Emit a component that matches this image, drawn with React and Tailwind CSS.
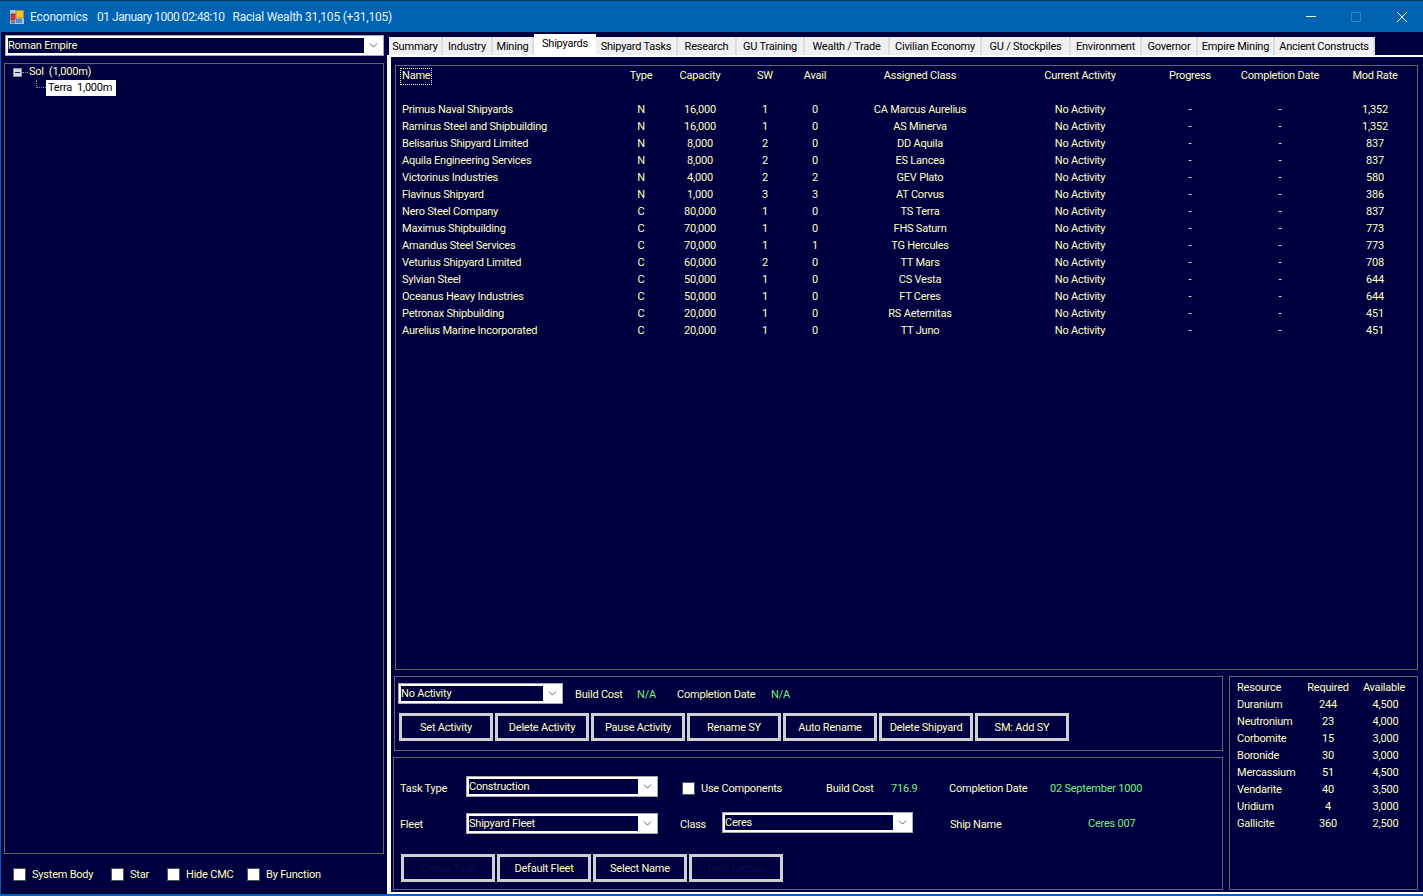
import React from 'react';
import { ChevronDown } from 'lucide-react';

const YELLOW = 'text-[#ffffc0]';
const GREEN = 'text-[#70f07c]';

const columns = [
  'w-[221px] text-left pl-[6px]',
  'w-[48px] text-center',
  'w-[70px] text-center',
  'w-[60px] text-center',
  'w-[40px] text-center',
  'w-[170px] text-center',
  'w-[150px] text-center',
  'w-[70px] text-center',
  'w-[110px] text-center',
  'w-[80px] text-center',
];

const shipyards = [
  ['Primus Naval Shipyards', 'N', '16,000', '1', '0', 'CA Marcus Aurelius', '1,352'],
  ['Ramirus Steel and Shipbuilding', 'N', '16,000', '1', '0', 'AS Minerva', '1,352'],
  ['Belisarius Shipyard Limited', 'N', '8,000', '2', '0', 'DD Aquila', '837'],
  ['Aquila Engineering Services', 'N', '8,000', '2', '0', 'ES Lancea', '837'],
  ['Victorinus Industries', 'N', '4,000', '2', '2', 'GEV Plato', '580'],
  ['Flavinus Shipyard', 'N', '1,000', '3', '3', 'AT Corvus', '386'],
  ['Nero Steel Company', 'C', '80,000', '1', '0', 'TS Terra', '837'],
  ['Maximus Shipbuilding', 'C', '70,000', '1', '0', 'FHS Saturn', '773'],
  ['Amandus Steel Services', 'C', '70,000', '1', '1', 'TG Hercules', '773'],
  ['Veturius Shipyard Limited', 'C', '60,000', '2', '0', 'TT Mars', '708'],
  ['Sylvian Steel', 'C', '50,000', '1', '0', 'CS Vesta', '644'],
  ['Oceanus Heavy Industries', 'C', '50,000', '1', '0', 'FT Ceres', '644'],
  ['Petronax Shipbuilding', 'C', '20,000', '1', '0', 'RS Aeternitas', '451'],
  ['Aurelius Marine Incorporated', 'C', '20,000', '1', '0', 'TT Juno', '451'],
];

const tabs = [
  ['Summary', 'w-[54px]'],
  ['Industry', 'w-[50px]'],
  ['Mining', 'w-[41px]'],
  ['Shipyards', 'w-[62px]'],
  ['Shipyard Tasks', 'w-[82px]'],
  ['Research', 'w-[59px]'],
  ['GU Training', 'w-[68px]'],
  ['Wealth / Trade', 'w-[85px]'],
  ['Civilian Economy', 'w-[92px]'],
  ['GU / Stockpiles', 'w-[89px]'],
  ['Environment', 'w-[71px]'],
  ['Governor', 'w-[56px]'],
  ['Empire Mining', 'w-[77px]'],
  ['Ancient Constructs', 'w-[100px]'],
];

const resources = [
  ['Duranium', '244', '4,500'],
  ['Neutronium', '23', '4,000'],
  ['Corbomite', '15', '3,000'],
  ['Boronide', '30', '3,000'],
  ['Mercassium', '51', '4,500'],
  ['Vendarite', '40', '3,500'],
  ['Uridium', '4', '3,000'],
  ['Gallicite', '360', '2,500'],
];

const Combo = ({ text, className }) => (
  <div className={`flex h-[21px] border border-[#a8a8a8] bg-white ${className}`}>
    <div className="flex-1 my-[2px] ml-[2px] bg-[#000040] leading-[16px] text-[#ffffc0]">{text}</div>
    <div className="w-[19px] flex items-center justify-center">
      <ChevronDown size={13} strokeWidth={1.5} className="text-[#404040]" />
    </div>
  </div>
);

const Button = ({ children, disabled }) => (
  <button className={`w-[94px] h-[28px] border-[3px] border-[#d0d0d0] bg-[#000040] text-center pt-[2px] ${disabled ? 'text-[#0c0c48]' : YELLOW}`}>
    {children}
  </button>
);

const Check = ({ label, className }) => (
  <div className={`flex items-center ${className}`}>
    <div className="w-[13px] h-[13px] bg-white border border-[#555]" />
    <span className={`ml-[6px] pt-[2px] ${YELLOW}`}>{label}</span>
  </div>
);

const TitleBar = () => (
  <div className="h-8 shrink-0 bg-[#0063b1] border-t border-[#0a3560] flex items-center text-[12px] tracking-[-0.15px] text-[#e4f2ff] pl-[10px]">
    <svg width="14" height="14" viewBox="0 0 14 14" className="shrink-0">
      <rect x="0" y="0" width="14" height="14" fill="#b9c4d2" />
      <rect x="6" y="0.5" width="7.5" height="7.5" fill="#f4c430" stroke="#8a6a10" strokeWidth="0.6" />
      <rect x="1" y="4" width="4" height="6" fill="#d8372a" stroke="#7a1a12" strokeWidth="0.6" />
      <rect x="6" y="9" width="6" height="4" fill="#4a8fdc" />
      <rect x="1" y="11" width="4" height="2.5" fill="#6a7a90" />
    </svg>
    <span className="ml-[6px] whitespace-pre">Economics</span>
    <span className="ml-[9px] whitespace-pre tracking-[-0.45px]">01 January 1000 02:48:10</span>
    <span className="ml-[8px] whitespace-pre tracking-[-0.2px]">Racial Wealth 31,105 (+31,105)</span>
    <div className="ml-auto flex items-center pr-[16px]">
      <div className="w-[10px] h-px bg-white" />
      <div className="w-[10px] h-[10px] ml-[35px] border border-[#2f80c6]" />
      <svg width="10" height="10" viewBox="0 0 10 10" className="ml-[36px]">
        <path d="M0 0L10 10M10 0L0 10" stroke="white" strokeWidth="1" />
      </svg>
    </div>
  </div>
);

const LeftPanel = () => (
  <div className="w-[386px] shrink-0 flex flex-col pl-[3px] pr-[2px]">
    <Combo text="Roman Empire" className="mt-[3px] ml-[1px] w-[379px] h-[20px]" />
    <div className="mt-[7px] w-[380px] h-[791px] border border-[#666] pl-[8px]">
      <div className="flex items-center h-[16px]">
        <div className="w-[9px] h-[9px] bg-[#d8d8e0] border border-[#8c8c9c] flex items-center justify-center">
          <div className="w-[5px] h-px bg-[#202060]" />
        </div>
        <div className="w-[6px] border-t border-dotted border-[#8c8c9c] mr-[1px]" />
        <span className={`whitespace-pre ${YELLOW}`}>Sol  (1,000m)</span>
      </div>
      <div className="flex items-center h-[16px] ml-[23px]">
        <div className="w-[10px] h-[8px] -mt-[8px] border-l border-b border-dotted border-[#8c8c9c]" />
        <span className="bg-white text-black px-[2px] h-[16px] leading-[16px] whitespace-pre w-[70px]">Terra  1,000m</span>
      </div>
    </div>
    <div className="flex mt-[11px] ml-[9px]">
      <Check label="System Body" className="w-[98px]" />
      <Check label="Star" className="w-[56px]" />
      <Check label="Hide CMC" className="w-[80px]" />
      <Check label="By Function" />
    </div>
  </div>
);

const TabStrip = () => (
  <div className="h-[23px] shrink-0 flex items-end pl-[2px]">
    {tabs.map(([name, width]) => name === 'Shipyards' ? (
      <div key={name} className={`${width} h-[21px] bg-white text-black text-center leading-[20px] shrink-0`}>{name}</div>
    ) : (
      <div key={name} className={`${width} h-[18px] bg-[#f0f0f0] border-r-2 border-[#dcdcdc] text-black text-center leading-[20px] shrink-0`}>{name}</div>
    ))}
  </div>
);

const ShipyardGrid = () => {
  const header = ['Name', 'Type', 'Capacity', 'SW', 'Avail', 'Assigned Class', 'Current Activity', 'Progress', 'Completion Date', 'Mod Rate'];
  return (
    <div className="ml-[4px] mt-[8px] w-[1023px] h-[605px] border border-[#666] shrink-0 pt-[1px]">
      <div className="flex h-[17px] leading-[17px]">
        {header.map((h, i) => (
          <div key={h} className={columns[i]}>
            {i === 0 ? <span className="inline-block -ml-[2px] px-[1px] h-[17px] leading-[14px] border border-dotted border-white">{h}</span> : h}
          </div>
        ))}
      </div>
      <div className="h-[17px]" />
      {shipyards.map((row) => {
        const cells = [...row.slice(0, 6), 'No Activity', '-', '-', row[6]];
        return (
          <div key={row[0]} className="flex h-[17px] leading-[17px]">
            {cells.map((c, i) => <div key={i} className={columns[i]}>{c}</div>)}
          </div>
        );
      })}
    </div>
  );
};

const ActivityBox = () => (
  <div className="ml-[3px] w-[829px] h-[75px] border border-[#666] shrink-0 pl-[3px] pt-[6px]">
    <div className="flex items-center h-[21px]">
      <Combo text="No Activity" className="w-[165px]" />
      <span className="ml-[12px] w-[62px] mt-[3px]">Build Cost</span>
      <span className={`w-[40px] mt-[3px] ${GREEN}`}>N/A</span>
      <span className="w-[94px] mt-[3px]">Completion Date</span>
      <span className={`mt-[3px] ${GREEN}`}>N/A</span>
    </div>
    <div className="flex gap-[2px] mt-[9px] ml-[1px]">
      {['Set Activity', 'Delete Activity', 'Pause Activity', 'Rename SY', 'Auto Rename', 'Delete Shipyard', 'SM: Add SY'].map((b) => (
        <Button key={b}>{b}</Button>
      ))}
    </div>
  </div>
);

const TaskBox = () => (
  <div className="ml-[2px] mt-[6px] w-[830px] h-[133px] border border-[#666] shrink-0 pl-[6px] pt-[18px]">
    <div className="flex items-center h-[21px]">
      <span className="w-[66px] mt-[6px]">Task Type</span>
      <Combo text="Construction" className="w-[192px]" />
      <Check label="Use Components" className="ml-[24px] w-[144px] mt-[4px]" />
      <span className="w-[65px] mt-[6px]">Build Cost</span>
      <span className={`w-[58px] mt-[6px] ${GREEN}`}>716.9</span>
      <span className="w-[101px] mt-[6px]">Completion Date</span>
      <span className={`mt-[6px] ${GREEN}`}>02 September 1000</span>
    </div>
    <div className="flex items-center h-[21px] mt-[16px]">
      <span className="w-[66px] mt-[4px]">Fleet</span>
      <Combo text="Shipyard Fleet" className="w-[192px]" />
      <span className="ml-[22px] w-[42px] mt-[4px]">Class</span>
      <Combo text="Ceres" className="w-[191px] -mt-[2px]" />
      <span className="ml-[37px] w-[138px] mt-[4px]">Ship Name</span>
      <span className={`mt-[2px] ${GREEN}`}>Ceres 007</span>
    </div>
    <div className="flex gap-[2px] mt-[20px] ml-[1px]">
      <Button disabled>Create Task</Button>
      <Button>Default Fleet</Button>
      <Button>Select Name</Button>
      <Button disabled>Refit Details</Button>
    </div>
  </div>
);

const ResourceBox = () => (
  <div className="ml-[6px] w-[189px] h-[214px] border border-[#666] shrink-0 pl-[7px] pt-[2px]">
    <div className="flex h-[17px] leading-[17px]">
      <span className="w-[61px]">Resource</span>
      <span className="w-[60px] text-center">Required</span>
      <span className="w-[52px] text-center">Available</span>
    </div>
    {resources.map(([name, req, avail]) => (
      <div key={name} className="flex h-[17px] leading-[17px]">
        <span className="w-[61px]">{name}</span>
        <span className="w-[60px] text-center">{req}</span>
        <span className="w-[52px] text-center pl-[3px]">{avail}</span>
      </div>
    ))}
  </div>
);

export default function App() {
  return (
    <div className={`w-[1423px] h-[896px] overflow-hidden flex flex-col bg-[#0063b1] text-[11px] tracking-[-0.22px] ${YELLOW}`} style={{ fontFamily: 'Roboto, sans-serif' }}>
      <TitleBar />
      <div className="flex h-[862px] ml-px bg-[#000040]">
        <LeftPanel />
        <div className="flex-1 flex flex-col min-w-0">
          <TabStrip />
          <div className="flex-1 flex flex-col border-t-2 border-l-4 border-b-2 border-white min-h-0">
            <ShipyardGrid />
            <div className="flex mt-[6px]">
              <div className="flex flex-col">
                <ActivityBox />
                <TaskBox />
              </div>
              <ResourceBox />
            </div>
          </div>
        </div>
      </div>
    </div>
  );
}
